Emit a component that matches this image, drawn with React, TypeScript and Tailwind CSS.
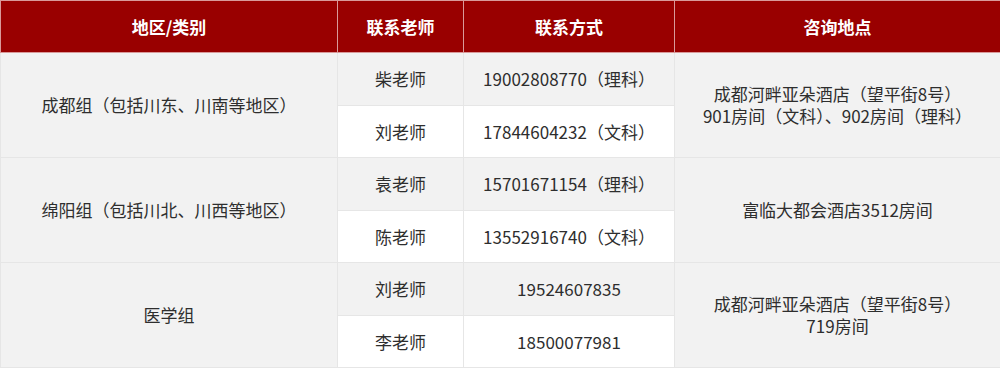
import React from "react";

type Row = { teacher: string; phone: string };
type Group = { name: string; location: string[]; rows: Row[] };

const groups: Group[] = [
  {
    name: "成都组（包括川东、川南等地区）",
    location: ["成都河畔亚朵酒店（望平街8号）", "901房间（文科）、902房间（理科）"],
    rows: [
      { teacher: "柴老师", phone: "19002808770（理科）" },
      { teacher: "刘老师", phone: "17844604232（文科）" },
    ],
  },
  {
    name: "绵阳组（包括川北、川西等地区）",
    location: ["富临大都会酒店3512房间"],
    rows: [
      { teacher: "袁老师", phone: "15701671154（理科）" },
      { teacher: "陈老师", phone: "13552916740（文科）" },
    ],
  },
  {
    name: "医学组",
    location: ["成都河畔亚朵酒店（望平街8号）", "719房间"],
    rows: [
      { teacher: "刘老师", phone: "19524607835" },
      { teacher: "李老师", phone: "18500077981" },
    ],
  },
];

export default function App() {
  return (
    <div
      className="w-[1000px] h-[369px] bg-white"
      style={{ fontFamily: '"Noto Sans CJK SC", "Noto Sans", sans-serif' }}
    >
      <table className="w-[1000px] border-collapse table-fixed text-[17px] text-[#2e2e2e]">
        <colgroup>
          <col className="w-[337px]" />
          <col className="w-[126px]" />
          <col className="w-[211px]" />
          <col className="w-[326px]" />
        </colgroup>
        <thead>
          <tr className="h-[52px] bg-[#990000] text-white font-bold">
            <th className="border border-[#d99a9a] p-0 text-center">地区/类别</th>
            <th className="border border-[#d99a9a] p-0 text-center">联系老师</th>
            <th className="border border-[#d99a9a] p-0 text-center">联系方式</th>
            <th className="border border-[#d99a9a] p-0 text-center">咨询地点</th>
          </tr>
        </thead>
        <tbody>
          {groups.map((g) =>
            g.rows.map((r, i) => (
              <tr key={g.name + i} className={i === 0 ? "h-[53px]" : "h-[52px]"}>
                {i === 0 && (
                  <td
                    rowSpan={2}
                    className="border border-[#e6e6e6] bg-[#f2f2f2] p-0 text-center leading-[22px]"
                  >
                    {g.name}
                  </td>
                )}
                <td
                  className={`border border-[#e6e6e6] p-0 text-center ${
                    i === 0 ? "bg-[#f2f2f2]" : "bg-white"
                  }`}
                >
                  {r.teacher}
                </td>
                <td
                  className={`border border-[#e6e6e6] p-0 text-center ${
                    i === 0 ? "bg-[#f2f2f2]" : "bg-white"
                  }`}
                >
                  {r.phone}
                </td>
                {i === 0 && (
                  <td
                    rowSpan={2}
                    className="border border-[#e6e6e6] bg-[#f2f2f2] p-0 text-center leading-[22px]"
                  >
                    {g.location.map((l) => (
                      <div key={l}>{l}</div>
                    ))}
                  </td>
                )}
              </tr>
            ))
          )}
        </tbody>
      </table>
    </div>
  );
}
